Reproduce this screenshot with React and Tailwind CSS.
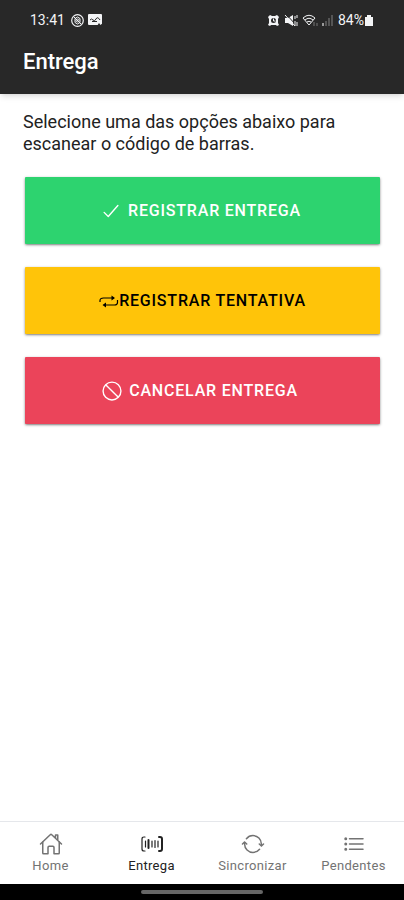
import React from "react";
import {
  IoBanOutline,
  IoCheckmarkOutline,
  IoHomeOutline,
  IoListOutline,
  IoSyncOutline,
} from "react-icons/io5";

function RepeatIcon() {
  return (
    <svg width="20" height="20" viewBox="0 0 20 20" fill="none" stroke="currentColor" strokeWidth="1.2">
      <path d="M1 11V9.500Q1 7 4.500 7H15" />
      <path d="M18.500 9V11.500Q18.500 14 15.500 14H5" />
      <path d="M12.500 4.500l3.500 2.500-3.500 2.500zM7 11.500l-3.500 2.500 3.500 2.500z" fill="currentColor" stroke="none" />
    </svg>
  );
}

function BarcodeIcon() {
  return (
    <svg width="24" height="24" viewBox="0 0 24 24" fill="none" stroke="currentColor" strokeLinecap="round">
      <path d="M5 5H4Q2 5 2 7V17Q2 19 4 19H5" strokeWidth="1.200" />
      <path d="M19 5H20Q22 5 22 7V17Q22 19 20 19H19" strokeWidth="2" />
      <path d="M5.500 9v6M12 9v6M15 8.500v7M18 9v6" strokeWidth="1.200" />
      <path d="M8.500 8v8" strokeWidth="2" />
    </svg>
  );
}

function StatusBar() {
  return (
    <div className="flex h-10 items-center justify-between px-[30px] text-sm text-gray-100">
      <div className="flex items-center gap-1.5">
        <span>13:41</span>
        <div className="flex items-center gap-1">
          <svg width="13" height="13" viewBox="0 0 13 13" fill="none" stroke="currentColor">
            <circle cx="6.500" cy="6.500" r="5.800" strokeWidth="1.200" />
            <path d="M4 4.500Q6.500 1.500 9 4.500V8.500Q6.500 11.500 4 8.500Z" />
            <circle cx="6.500" cy="6.500" r="1.500" />
            <path d="M3 3l7 7" />
          </svg>
          <svg width="15" height="12" viewBox="0 0 15 12">
            <rect width="14" height="11" rx="1" fill="currentColor" />
            <path d="M2 6q1.500-2 3 0t3-1 4 1M4 7.500h5" stroke="#282828" fill="none" />
            <path d="M9 12l2-3 1.500 2L15 9v3z" fill="#282828" />
          </svg>
        </div>
      </div>
      <div className="flex items-center gap-1">
        <svg width="13" height="13" viewBox="0 0 13 13">
          <path d="M1 3l2-2 2 1h3l2-1 2 2-1 2v4l1 2-2 1-1-1H4l-1 1-2-1 1-2V5z" fill="currentColor" />
          <circle cx="6.500" cy="6.500" r="2.500" fill="#282828" />
          <path d="M6.500 4.500v2.500h2" stroke="currentColor" fill="none" />
        </svg>
        <svg width="14" height="13" viewBox="0 0 14 13" stroke="currentColor">
          <path d="M1 4h3l5-3v11L4 9H1z" fill="currentColor" stroke="none" />
          <path d="M2 0l10 11" stroke="#282828" />
          <path d="M1 1l10 11M11 2v3M11 7v5M13 1v3M13 8v4" fill="none" />
        </svg>
        <svg width="16" height="13" viewBox="0 0 16 13" fill="none" stroke="currentColor">
          <path d="M1 4Q7 -1.500 13 4L7 11ZM3 6Q7 2.500 11 6M5 8Q7 6.500 9 8" />
          <path d="M12 8v4M15 9v3" stroke="#777777" />
        </svg>
        <svg width="12" height="13" viewBox="0 0 12 13" fill="#555555">
          <path d="M0 9h2v3H0z" fill="#999999" />
          <path d="M3 7h2v5H3zM6 4h2v8H6zM9 1h2v11H9z" />
        </svg>
        <div className="flex items-center">
          <span>84%</span>
          <svg width="10" height="13" viewBox="0 0 10 13" fill="currentColor">
            <path d="M3 1h4v2h2v9H1V3h2z" />
          </svg>
        </div>
      </div>
    </div>
  );
}

function ActionButton({ icon, className, children }) {
  return (
    <button
      type="button"
      className={`flex h-[67px] w-full cursor-pointer items-center justify-center rounded-[1px] text-base font-medium tracking-wider uppercase shadow-sm shadow-black/40 ${className}`}
    >
      {icon}
      {children}
    </button>
  );
}

const tabs = [
  { label: "Home", icon: <IoHomeOutline size={24} /> },
  { label: "Entrega", icon: <BarcodeIcon />, active: true },
  { label: "Sincronizar", icon: <IoSyncOutline size={24} /> },
  { label: "Pendentes", icon: <IoListOutline size={24} /> },
];

export default function App() {
  return (
    <div className="flex min-h-screen flex-col bg-white font-[Roboto,sans-serif]">
      <header className="bg-[#282828] shadow-md">
        <StatusBar />
        <h1 className="px-[23px] pt-2 pb-[18px] text-[22px] leading-7 font-medium text-white">
          Entrega
        </h1>
      </header>

      <main className="flex-1 px-[23px] pt-[17px]">
        <p className="text-[18px] leading-[22px] text-[#222222]">
          Selecione uma das opções abaixo para escanear o código de barras.
        </p>
        <div className="mt-[22px] flex flex-col gap-[23px] pr-px pl-0.5">
          <ActionButton
            icon={<IoCheckmarkOutline size={22} className="mr-1.5 -ml-1" />}
            className="bg-[#2dd36f] text-white"
          >
            Registrar entrega
          </ActionButton>
          <ActionButton icon={<RepeatIcon />} className="bg-[#ffc409] text-black">
            Registrar tentativa
          </ActionButton>
          <ActionButton
            icon={<IoBanOutline size={22} className="mr-1.5 -ml-1.5" />}
            className="bg-[#eb445a] text-white"
          >
            Cancelar entrega
          </ActionButton>
        </div>
      </main>

      <nav className="grid h-[63px] grid-cols-4 border-t border-gray-200">
        {tabs.map((tab) => (
          <a
            key={tab.label}
            href="#"
            className={`flex flex-col items-center justify-center pt-0.5 text-[13px] leading-5 tracking-wide ${
              tab.active ? "text-[#222222]" : "text-[#737373]"
            }`}
          >
            {tab.icon}
            {tab.label}
          </a>
        ))}
      </nav>
      <div className="flex h-4 items-center justify-center bg-black">
        <div className="h-1 w-[30%] rounded-full bg-[#666666]" />
      </div>
    </div>
  );
}
